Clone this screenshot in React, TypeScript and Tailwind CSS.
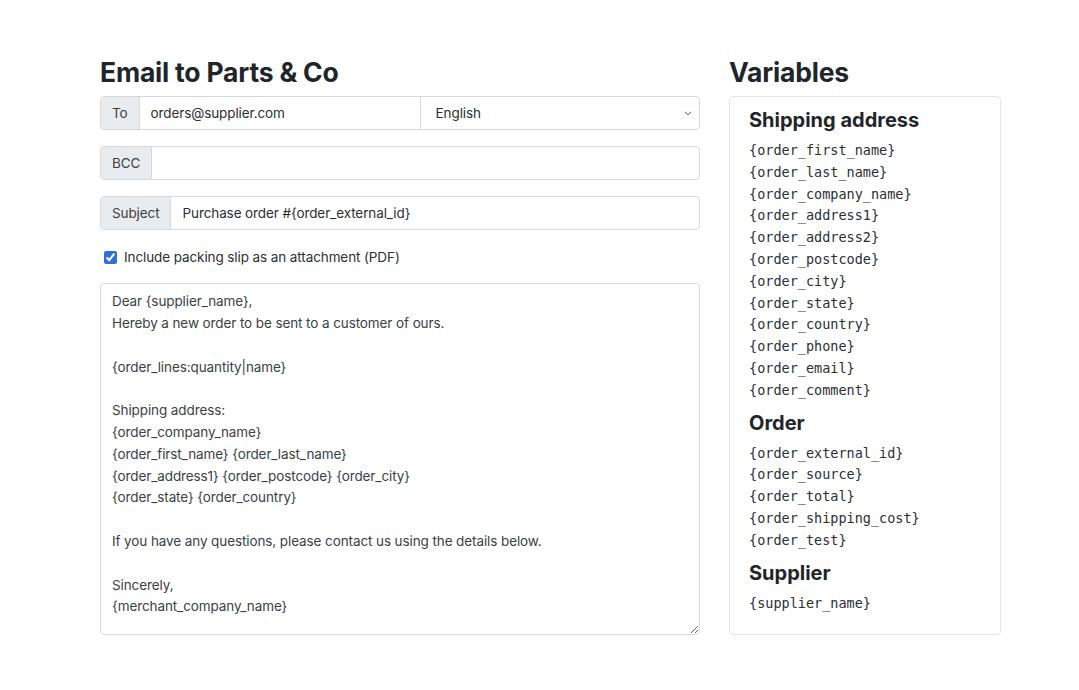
import React from 'react';

const SANS = { fontFamily: 'Inter, "Noto Sans", Arial, sans-serif' };
const MONO = { fontFamily: '"DejaVu Sans Mono", "Liberation Mono", monospace' };

const BODY = `Dear {supplier_name},
Hereby a new order to be sent to a customer of ours.

{order_lines:quantity|name}

Shipping address:
{order_company_name}
{order_first_name} {order_last_name}
{order_address1} {order_postcode} {order_city}
{order_state} {order_country}

If you have any questions, please contact us using the details below.

Sincerely,
{merchant_company_name}`;

const GROUPS: { title: string; vars: string[] }[] = [
  {
    title: 'Shipping address',
    vars: [
      'order_first_name',
      'order_last_name',
      'order_company_name',
      'order_address1',
      'order_address2',
      'order_postcode',
      'order_city',
      'order_state',
      'order_country',
      'order_phone',
      'order_email',
      'order_comment',
    ],
  },
  {
    title: 'Order',
    vars: ['order_external_id', 'order_source', 'order_total', 'order_shipping_cost', 'order_test'],
  },
  { title: 'Supplier', vars: ['supplier_name'] },
];

const Addon: React.FC<{ label: string }> = ({ label }) => (
  <div className="flex items-center px-[11px] bg-[#e9ecef] border-r border-[#d6d9dc] text-[13.5px] tracking-[-0.1px] text-[#3a3f44]">
    {label}
  </div>
);

const App: React.FC = () => {
  return (
    <div className="min-h-[690px] bg-white text-[#212529]" style={SANS}>
      <div className="flex gap-[29px] pl-[100px] pt-[54px]">
        {/* Compose form */}
        <div className="w-[600px]">
          <h2 className="text-[26.5px] font-bold leading-[36px] tracking-[-0.2px] mb-[6px]">Email to Parts &amp; Co</h2>

          <div className="flex h-[34px] border border-[#d6d9dc] rounded-[4px] overflow-hidden">
            <Addon label="To" />
            <div className="w-[281px] flex items-center px-[11px] text-[13.5px] tracking-[-0.1px] text-[#2b2f33] border-r border-[#d6d9dc]">
              orders@supplier.com
            </div>
            <div className="flex-1 flex items-center justify-between pl-[15px] pr-[6px] text-[13.5px] tracking-[-0.1px] text-[#2b2f33]">
              <span>English</span>
              <svg width="10" height="10" viewBox="0 0 16 16" fill="none" stroke="#555" strokeWidth="1.6">
                <path d="M3 6l5 5 5-5" />
              </svg>
            </div>
          </div>

          <div className="flex h-[34px] mt-4 border border-[#d6d9dc] rounded-[4px] overflow-hidden">
            <Addon label="BCC" />
            <div className="flex-1" />
          </div>

          <div className="flex h-[34px] mt-4 border border-[#d6d9dc] rounded-[4px] overflow-hidden">
            <Addon label="Subject" />
            <div className="flex-1 flex items-center px-[11px] text-[13.5px] tracking-[-0.1px] text-[#2b2f33]">
              Purchase order #{'{order_external_id}'}
            </div>
          </div>

          <label className="flex items-center gap-[7px] mt-[17px] ml-[4px] text-[13.5px] tracking-[-0.1px] text-[#2b2f33]">
            <input type="checkbox" checked readOnly className="w-[13px] h-[13px] accent-[#2f6fd6]" />
            Include packing slip as an attachment (PDF)
          </label>

          <textarea
            defaultValue={BODY}
            className="block w-full h-[352px] mt-[16px] px-[11px] py-[7px] border border-[#d6d9dc] rounded-[4px] text-[13.5px] tracking-[-0.1px] leading-[21.8px] text-[#3a3f44] outline-none resize-y"
            style={SANS}
          />
        </div>

        {/* Variables sidebar */}
        <div className="w-[272px]">
          <h2 className="text-[26.5px] font-bold leading-[36px] tracking-[-0.2px] mb-[6px]">Variables</h2>
          <div className="h-[539px] border border-[#e3e5e8] rounded-[4px] px-[19px] pt-[10px]">
            {GROUPS.map((g, i) => (
              <div key={g.title} className={i > 0 ? 'mt-[8px]' : ''}>
                <h3 className="text-[20px] font-bold leading-[26px] mb-[7px]">{g.title}</h3>
                {g.vars.map(v => (
                  <div key={v} className="text-[13.5px] leading-[21.8px] text-[#2b2f33]" style={MONO}>
                    {'{' + v + '}'}
                  </div>
                ))}
              </div>
            ))}
          </div>
        </div>
      </div>
    </div>
  );
};

export default App;
